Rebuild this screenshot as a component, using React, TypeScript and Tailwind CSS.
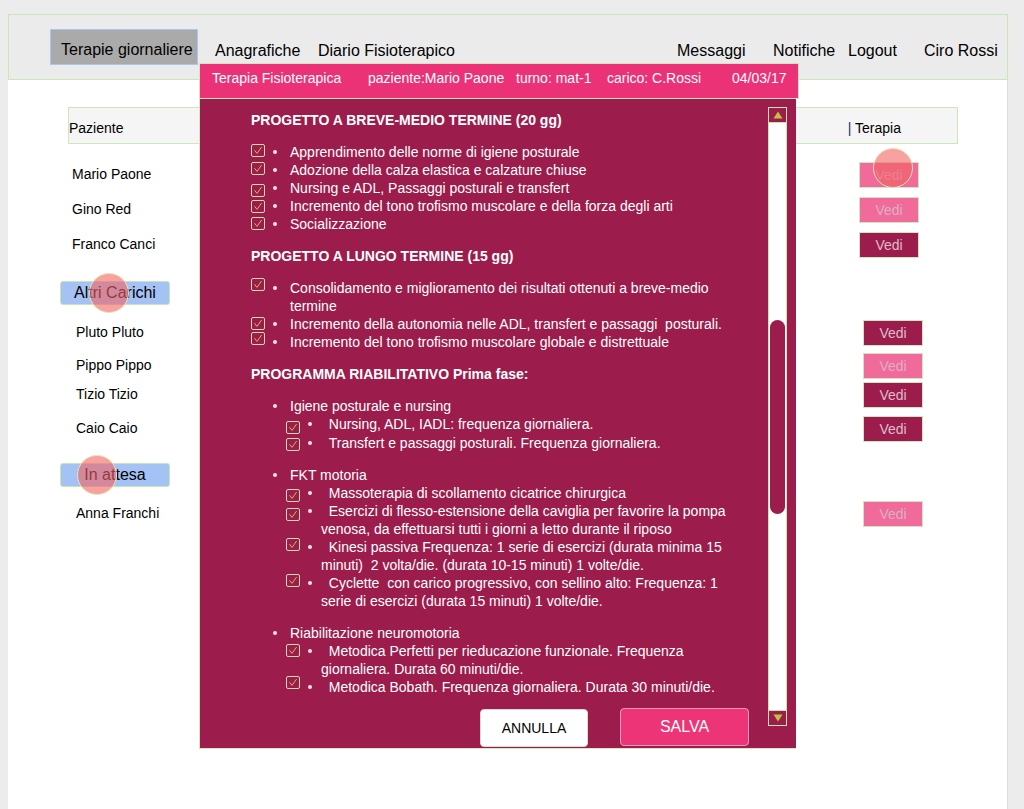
import React from "react";

// Terapie giornaliere — elenco pazienti con la scheda "Terapia Fisioterapica" aperta sopra.

type Tone = "pink" | "dark";

const VEDI_TONE: Record<Tone, string> = {
  pink: "bg-[#f06a9a] text-[#dcb0c4]",
  dark: "bg-[#9c1c4b] text-[#dcbccb]",
};

type PatientRow = { name: string; tone: Tone; cls: string };

const GROUP_MAIN: PatientRow[] = [
  { name: "Mario Paone", tone: "pink", cls: "mt-[18px]" },
  { name: "Gino Red", tone: "pink", cls: "mt-[9px]" },
  { name: "Franco Canci", tone: "dark", cls: "mt-[9px]" },
];

const GROUP_OTHER: PatientRow[] = [
  { name: "Pluto Pluto", tone: "dark", cls: "mt-[15px]" },
  { name: "Pippo Pippo", tone: "pink", cls: "mt-[7px]" },
  { name: "Tizio Tizio", tone: "dark", cls: "mt-[3px]" },
  { name: "Caio Caio", tone: "dark", cls: "mt-[8px]" },
];

function Patient({ row, indent }: { row: PatientRow; indent: "main" | "other" }) {
  return (
    <div className={`flex h-[26px] items-center justify-between ${row.cls}`}>
      <span
        className={
          indent === "main" ? "pb-[2px] pl-[12px] text-[14px]" : "pb-[2px] pl-[16px] text-[14px]"
        }
      >
        {row.name}
      </span>
      <span
        className={[
          "flex h-[26px] w-[60px] items-center justify-center border border-[#cfe6c2] text-[14px]",
          VEDI_TONE[row.tone],
          indent === "main" ? "mr-[39px]" : "mr-[35px]",
        ].join(" ")}
      >
        Vedi
      </span>
    </div>
  );
}

function GroupButton({ label, cls }: { label: string; cls: string }) {
  return (
    <div
      className={`flex h-[24px] w-[110px] items-center justify-center rounded-[3px] border border-[#c8e6b4] bg-[#a4c2f4] text-[16px] ${cls}`}
    >
      {label}
    </div>
  );
}

function Check({ cls }: { cls: string }) {
  return (
    <span
      className={`flex h-[13px] w-[14px] items-center justify-center rounded-[2px] border border-[#c9dcab] ${cls}`}
    >
      <svg width="10" height="9" viewBox="0 0 10 9">
        <path d="M1.5 4.2 L4 7.4 L8.6 1" fill="none" stroke="#d1b45c" strokeWidth="1" />
      </svg>
    </span>
  );
}

const Dot = () => <span className="mt-[7px] h-[4px] w-[4px] shrink-0 rounded-full bg-[#efe2e8]" />;

// voce di primo livello: casella (opzionale) · pallino · testo
function Item({
  text,
  check,
  children,
}: {
  text: string;
  check?: string;
  children?: React.ReactNode;
}) {
  return (
    <div>
      <div className="flex">
        <div className="flex w-[14px] shrink-0 flex-col">{check && <Check cls={check} />}</div>
        <span className="ml-[8px] flex">
          <Dot />
        </span>
        <span className="ml-[13px] flex-1 whitespace-pre-wrap">{text}</span>
      </div>
      {children}
    </div>
  );
}

function SubItem({ text, check }: { text: string; check: string }) {
  return (
    <div className="ml-[35px] flex">
      <div className="flex w-[14px] shrink-0 flex-col">
        <Check cls={check} />
      </div>
      <span className="ml-[8px] flex">
        <Dot />
      </span>
      <span className="ml-[9px] flex-1 whitespace-pre-wrap">{"\u00a0\u00a0" + text}</span>
    </div>
  );
}

function Heading({ children, cls = "" }: { children: React.ReactNode; cls?: string }) {
  return <div className={`font-bold ${cls}`}>{children}</div>;
}

function Scrollbar() {
  return (
    <div className="mt-[8px] flex h-[619px] w-[19px] flex-col border border-[#c6e3b0] bg-white">
      <div className="flex h-[15px] items-center justify-center border-b border-[#c6e3b0] bg-[#9c1c4b]">
        <svg width="10" height="8" viewBox="0 0 10 8">
          <path d="M5 0.5 L9.5 7.5 L0.5 7.5 Z" fill="#b7c63a" />
        </svg>
      </div>
      <div className="mx-[1px] mt-[197px] h-[194px] rounded-[8px] bg-[#9c1c4b]" />
      <div className="flex-1" />
      <div className="flex h-[15px] items-center justify-center border-t border-[#c6e3b0] bg-[#9c1c4b]">
        <svg width="10" height="8" viewBox="0 0 10 8">
          <path d="M0.5 0.5 L9.5 0.5 L5 7.5 Z" fill="#b7c63a" />
        </svg>
      </div>
    </div>
  );
}

function TherapyModal() {
  return (
    <div className="absolute left-[199px] top-[63px] w-[600px]">
      <div className="flex h-[36px] items-start border border-[#cfe6bd] bg-[#ec3277] pl-[12px] pt-[6px] text-[14px] leading-[16px] text-white">
        <span className="w-[156px]">Terapia Fisioterapica</span>
        <span className="w-[148px]">paziente:Mario Paone</span>
        <span className="w-[91px]">turno: mat-1</span>
        <span className="w-[125px]">carico: C.Rossi</span>
        <span>04/03/17</span>
      </div>

      <div className="flex h-[650px] w-[597px] border-b border-l border-[#d4e6c4] bg-[#9c1c4b] text-white">
        <div className="flex w-[568px] flex-col">
          <div className="overflow-hidden pl-[51px] pr-[23px] pt-[12px] text-[14px] leading-[18px]">
            <Heading>PROGETTO A BREVE-MEDIO TERMINE (20 gg)</Heading>
            <div className="mt-[14px]">
              <Item check="mt-[1px]" text="Apprendimento delle norme di igiene posturale" />
              <Item check="mt-[1px]" text="Adozione della calza elastica e calzature chiuse" />
              <Item check="mt-[5px]" text="Nursing e ADL, Passaggi posturali e transfert" />
              <Item check="mt-[3px]" text="Incremento del tono trofismo muscolare e della forza degli arti" />
              <Item check="mt-[2px]" text="Socializzazione" />
            </div>

            <Heading cls="mt-[14px]">PROGETTO A LUNGO TERMINE (15 gg)</Heading>
            <div className="mt-[14px]">
              <Item
                check="mt-[-1px]"
                text="Consolidamento e miglioramento dei risultati ottenuti a breve-medio termine"
              />
              <Item
                check="mt-[2px]"
                text="Incremento della autonomia nelle ADL, transfert e passaggi  posturali."
              />
              <Item check="mt-[-1px]" text="Incremento del tono trofismo muscolare globale e distrettuale" />
            </div>

            <Heading cls="mt-[14px]">PROGRAMMA RIABILITATIVO Prima fase:</Heading>
            <div className="mt-[14px]">
              <Item text="Igiene posturale e nursing">
                <SubItem check="mt-[6px]" text="Nursing, ADL, IADL: frequenza giornaliera." />
                <SubItem check="mt-[4px]" text="Transfert e passaggi posturali. Frequenza giornaliera." />
              </Item>
            </div>
            <div className="mt-[14px]">
              <Item text="FKT motoria">
                <SubItem check="mt-[5px]" text="Massoterapia di scollamento cicatrice chirurgica" />
                <SubItem
                  check="mt-[6px]"
                  text="Esercizi di flesso-estensione della caviglia per favorire la pompa venosa, da effettuarsi tutti i giorni a letto durante il riposo"
                />
                <SubItem
                  check="mt-[0px]"
                  text="Kinesi passiva Frequenza: 1 serie di esercizi (durata minima 15 minuti)  2 volta/die. (durata 10-15 minuti) 1 volte/die."
                />
                <SubItem
                  check="mt-[0px]"
                  text="Cyclette  con carico progressivo, con sellino alto: Frequenza: 1 serie di esercizi (durata 15 minuti) 1 volte/die."
                />
              </Item>
            </div>
            <div className="mt-[14px]">
              <Item text="Riabilitazione neuromotoria">
                <SubItem
                  check="mt-[2px]"
                  text="Metodica Perfetti per rieducazione funzionale. Frequenza giornaliera. Durata 60 minuti/die."
                />
                <SubItem
                  check="mt-[-2px]"
                  text="Metodica Bobath. Frequenza giornaliera. Durata 30 minuti/die."
                />
              </Item>
            </div>
          </div>

          <div className="mt-auto flex items-end justify-end gap-[32px] pb-[1px] pr-[19px]">
            <button
              type="button"
              className="h-[38px] w-[108px] rounded-[4px] border border-[#d8d8d8] bg-white text-[14px] text-black"
            >
              ANNULLA
            </button>
            <button
              type="button"
              className="mb-[1px] h-[38px] w-[129px] rounded-[4px] border border-[#f39ab9] bg-[#ec3477] text-[16px] text-white"
            >
              SALVA
            </button>
          </div>
        </div>
        <Scrollbar />
      </div>
    </div>
  );
}

// segni di tocco (mockup)
const Touch = ({ cls }: { cls: string }) => (
  <span
    className={`absolute h-[40px] w-[40px] rounded-full border border-[#e8e4b8] bg-[rgba(242,98,98,0.6)] ${cls}`}
  />
);

export default function App() {
  return (
    <div className="relative h-[809px] w-[1024px] overflow-hidden bg-[#ececec] font-['Liberation_Sans',Arial,sans-serif] text-black">
      <div className="ml-[8px] flex h-full w-[1000px] flex-col pt-[14px]">
        <header className="flex h-[66px] items-center border border-[#c9e7b5] bg-[#ebebeb] pl-[41px] text-[16px]">
          <span className="flex h-[36px] w-[148px] items-center border border-[#a8c6f0] bg-[#aaaaaa] pl-[10px] pt-[6px]">
            Terapie giornaliere
          </span>
          <span className="ml-[17px] w-[103px] pt-[8px]">Anagrafiche</span>
          <span className="w-[359px] pt-[8px]">Diario Fisioterapico</span>
          <span className="w-[96px] pt-[8px]">Messaggi</span>
          <span className="w-[75px] pt-[8px]">Notifiche</span>
          <span className="w-[76px] pt-[8px]">Logout</span>
          <span className="pt-[8px]">Ciro Rossi</span>
        </header>

        <main className="flex-1 border-r border-[#dcdcdc] bg-white">
          <div className="ml-[60px] mt-[27px] flex h-[37px] w-[890px] items-center border border-[#cde8b8] bg-[#f5f5f5] pt-[5px] text-[14px]">
            <span>Paziente</span>
            <span className="ml-auto mr-[56px]">
              <span className="text-[#1c2f6b]">|</span> Terapia
            </span>
          </div>

          <div className="ml-[52px] w-[898px]">
            {GROUP_MAIN.map((row) => (
              <Patient key={row.name} row={row} indent="main" />
            ))}
            <GroupButton label="Altri Carichi" cls="mt-[23px]" />
            {GROUP_OTHER.map((row) => (
              <Patient key={row.name} row={row} indent="other" />
            ))}
            <GroupButton label="In attesa" cls="mt-[21px]" />
            <Patient row={{ name: "Anna Franchi", tone: "pink", cls: "mt-[14px]" }} indent="other" />
          </div>
        </main>
      </div>

      <TherapyModal />

      <Touch cls="left-[873px] top-[148px]" />
      <Touch cls="left-[89px] top-[273px]" />
      <Touch cls="left-[77px] top-[455px]" />
    </div>
  );
}
